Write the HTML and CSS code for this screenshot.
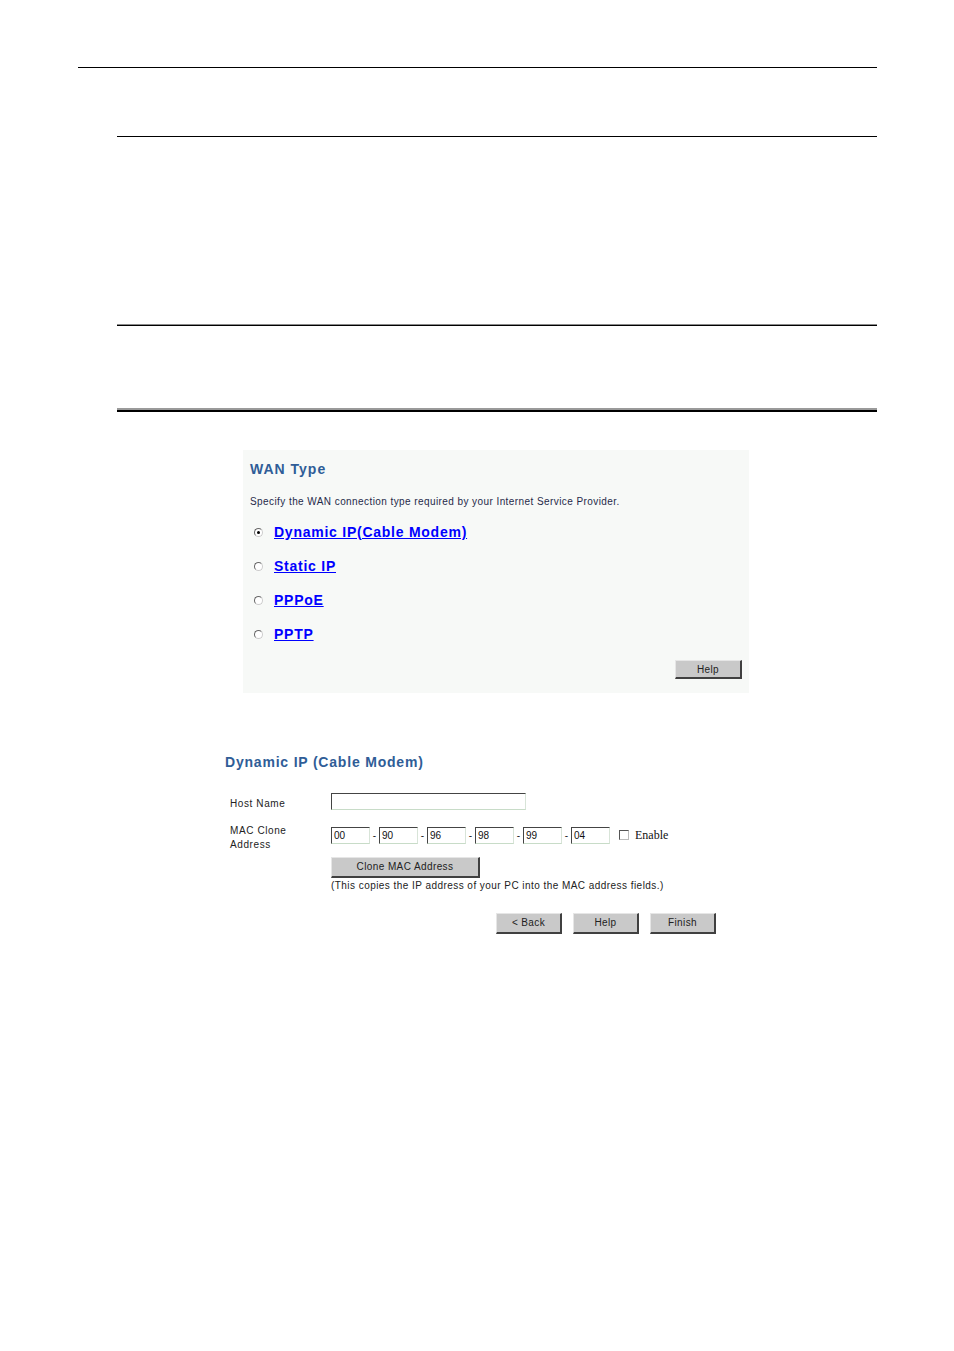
FILE: index.html
```html
<!DOCTYPE html>
<html>
<head>
<meta charset="utf-8">
<link rel="stylesheet" href="styles.css">
</head>
<body>
<div class="page">
  <div class="rule rule-1"></div>
  <div class="rule rule-2"></div>
  <div class="rule rule-3"></div>
  <div class="rule rule-4"></div>

  <div class="wan-box">
    <div class="wan-title">WAN Type</div>
    <div class="wan-desc">Specify the WAN connection type required by your Internet Service Provider.</div>
    <div class="options">
      <div class="option"><span class="radio checked"></span><a class="opt-link" href="#">Dynamic IP(Cable Modem)</a></div>
      <div class="option"><span class="radio"></span><a class="opt-link" href="#">Static IP</a></div>
      <div class="option"><span class="radio"></span><a class="opt-link" href="#">PPPoE</a></div>
      <div class="option"><span class="radio"></span><a class="opt-link" href="#">PPTP</a></div>
    </div>
    <div class="help-row"><span class="btn btn-help">Help</span></div>
  </div>

  <div class="dyn">
    <div class="dyn-title">Dynamic IP (Cable Modem)</div>
    <div class="form-row host-row">
      <div class="label">Host Name</div>
      <div class="field"><span class="input host-input"></span></div>
    </div>
    <div class="form-row mac-row">
      <div class="label">MAC Clone<br>Address</div>
      <div class="field mac-fields">
        <span class="input mac">00</span><span class="dash">-</span>
        <span class="input mac">90</span><span class="dash">-</span>
        <span class="input mac">96</span><span class="dash">-</span>
        <span class="input mac">98</span><span class="dash">-</span>
        <span class="input mac">99</span><span class="dash">-</span>
        <span class="input mac">04</span>
        <span class="checkbox"></span><span class="enable">Enable</span>
      </div>
    </div>
    <div class="clone-block">
      <span class="btn btn-clone">Clone MAC Address</span>
      <div class="note">(This copies the IP address of your PC into the MAC address fields.)</div>
    </div>
    <div class="nav-buttons">
      <span class="btn btn-nav">&lt; Back</span>
      <span class="btn btn-nav">Help</span>
      <span class="btn btn-nav">Finish</span>
    </div>
  </div>
</div>
</body>
</html>
```

FILE: styles.css
```css
html, body {
  margin: 0;
  padding: 0;
  background: #ffffff;
}
.page {
  width: 954px;
  height: 1351px;
  font-family: "Liberation Sans", Arial, sans-serif;
  color: #222;
  overflow: hidden;
}
.rule-1 {
  margin: 67px 77px 0 78px;
  height: 0;
  border-top: 1px solid #000;
}
.rule-2 {
  margin: 68px 77px 0 117px;
  height: 0;
  border-top: 1px solid #000;
}
.rule-3 {
  margin: 187px 77px 0 117px;
  height: 1px;
  border-top: 1px solid #8a8a8a;
  background: #000;
}
.rule-4 {
  margin: 82px 77px 0 117px;
  height: 2px;
  border-top: 2px solid #9a9a9a;
  background: #000;
}

/* WAN type box */
.wan-box {
  margin: 38px 0 0 243px;
  width: 506px;
  height: 243px;
  box-sizing: border-box;
  background: #f7f9f7;
  padding: 11px 7px 0 7px;
  display: flex;
  flex-direction: column;
}
.wan-title {
  font-size: 14px;
  font-weight: bold;
  color: #2f5d97;
  line-height: 17px;
  letter-spacing: 1px;
}
.wan-desc {
  margin-top: 18px;
  font-size: 10px;
  line-height: 12px;
  color: #1f2a4a;
  letter-spacing: 0.42px;
}
.options {
  margin-top: 16px;
  display: flex;
  flex-direction: column;
  gap: 17px;
}
.option {
  display: flex;
  align-items: center;
  height: 17px;
  padding-left: 4px;
}
.radio {
  width: 7px;
  height: 7px;
  border: 1px solid #666;
  border-right-color: #ccc;
  border-bottom-color: #ccc;
  border-radius: 50%;
  background: #fff;
  margin-right: 11px;
  position: relative;
}
.radio.checked::after {
  content: "";
  position: absolute;
  left: 2px;
  top: 2px;
  width: 3px;
  height: 3px;
  border-radius: 50%;
  background: #000;
}
.opt-link {
  font-size: 14px;
  font-weight: bold;
  color: #0000ff;
  text-decoration: underline;
  line-height: 17px;
  letter-spacing: 0.75px;
}
.help-row {
  margin-top: 17px;
  display: flex;
  justify-content: flex-end;
}
.btn {
  display: inline-flex;
  align-items: center;
  justify-content: center;
  box-sizing: border-box;
  background: #c9c9c9;
  border-top: 1px solid #e6e6e6;
  border-left: 1px solid #e6e6e6;
  border-right: 2px solid #404040;
  border-bottom: 2px solid #404040;
  font-size: 10px;
  color: #222;
  letter-spacing: 0.4px;
}
.btn-help {
  width: 67px;
  height: 19px;
}

/* Dynamic IP section */
.dyn {
  margin: 61px 0 0 225px;
  width: 500px;
}
.dyn-title {
  font-size: 14px;
  font-weight: bold;
  color: #2f5d97;
  line-height: 17px;
  letter-spacing: 0.8px;
}
.form-row {
  display: flex;
}
.label {
  width: 106px;
  padding-left: 5px;
  box-sizing: border-box;
  font-size: 10px;
  line-height: 14px;
  color: #222;
  letter-spacing: 0.6px;
}
.host-row {
  margin-top: 22px;
  align-items: center;
}
.input {
  display: inline-block;
  box-sizing: border-box;
  background: #fff;
  border-top: 1px solid #444;
  border-left: 1px solid #444;
  border-right: 1px solid #d8e4d8;
  border-bottom: 1px solid #c8dcc8;
  font-size: 10px;
  line-height: 15px;
  padding-left: 2px;
  color: #111;
}
.host-input {
  width: 195px;
  height: 17px;
}
.mac-row {
  margin-top: 10px;
}
.mac-fields {
  display: flex;
  align-items: center;
  height: 28px;
  margin-top: -3px;
}
.mac {
  width: 39px;
  height: 17px;
}
.dash {
  width: 9px;
  text-align: center;
  font-size: 10px;
}
.checkbox {
  width: 8px;
  height: 8px;
  border: 1px solid #555;
  border-right-color: #bbb;
  border-bottom-color: #bbb;
  background: #fff;
  margin-left: 9px;
  margin-right: 6px;
}
.enable {
  font-family: "Liberation Serif", "Times New Roman", serif;
  font-size: 12px;
  color: #111;
}
.clone-block {
  margin: 4px 0 0 106px;
}
.btn-clone {
  width: 149px;
  height: 21px;
}
.note {
  font-size: 10px;
  line-height: 13px;
  margin-top: 1px;
  letter-spacing: 0.45px;
}
.nav-buttons {
  margin: 21px 0 0 271px;
  display: flex;
  gap: 11px;
}
.btn-nav {
  width: 66px;
  height: 21px;
}
```
